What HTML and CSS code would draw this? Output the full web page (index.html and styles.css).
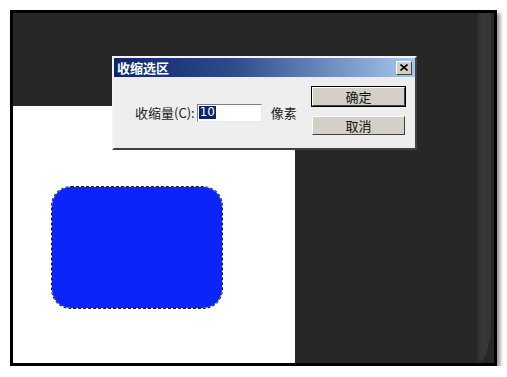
FILE: index.html
```html
<!DOCTYPE html>
<html>

<head>
    <meta charset="UTF-8">
    <title>收缩选区</title>
    <link rel="stylesheet" href="styles.css">
</head>

<body>

    <div class="frame">
        <div class="workspace">
            <div class="canvas">
                <div class="shape"></div>
            </div>
            <div class="rail"></div>
        </div>

        <div class="dialog">
            <div class="titlebar">
                <span class="title">收缩选区</span>
                <span class="close">
                    <svg width="8" height="7" viewBox="0 0 8 7">
                        <path d="M0.5 0.5 L7.5 6.5 M7.5 0.5 L0.5 6.5" stroke="#000" stroke-width="1.6" fill="none" />
                    </svg>
                </span>
            </div>
            <div class="dialog-body">
                <div class="field">
                    <label for="amount">收缩量(C):</label>
                    <span class="input" id="amount"><span class="sel">10</span></span>
                    <span class="unit">像素</span>
                </div>
                <div class="buttons">
                    <button type="button" class="btn default">确定</button>
                    <button type="button" class="btn">取消</button>
                </div>
            </div>
        </div>
    </div>

</body>

</html>
```

FILE: styles.css
```css
body {
    margin: 0;
    background: #fff;
    font-family: "Noto Sans CJK SC", "DejaVu Sans", sans-serif;
}

.frame {
    position: relative;
    width: 481px;
    height: 350px;
    margin: 10px 0 0 10px;
    border: 3px solid #000;
    box-shadow: 3px 3px 4px rgba(0, 0, 0, 0.45);
}

.workspace {
    display: flex;
    align-items: flex-end;
    height: 100%;
    background: #272727;
}

.canvas {
    width: 282px;
    height: 257px;
    padding: 80px 0 0 38px;
    box-sizing: border-box;
    background: #fff;
}

.shape {
    width: 172px;
    height: 123px;
    box-sizing: border-box;
    border: 1px dashed #101830;
    border-radius: 20px;
    background: #0b24f8;
    background-clip: padding-box;
}

.rail {
    align-self: stretch;
    width: 14px;
    margin: 0 3px 0 auto;
    background: linear-gradient(to right, #2c2c2c, #383838 40%, #363636);
    border-bottom-right-radius: 14px 40px;
}

.dialog {
    position: absolute;
    left: 99px;
    top: 43px;
    width: 301px;
    height: 90px;
    border: 2px solid;
    border-color: #f4f4f4 #404040 #404040 #f4f4f4;
    background: #eeeeee;
}

.titlebar {
    display: flex;
    align-items: center;
    height: 19px;
    padding: 0 3px 0 3px;
    background: linear-gradient(to right, #0c266c, #2e4c8a 40%, #a6c8ee);
}

.title {
    color: #fff;
    font-size: 13px;
    font-weight: bold;
    line-height: 19px;
}

.close {
    display: flex;
    align-items: center;
    justify-content: center;
    width: 14px;
    height: 12px;
    margin-left: auto;
    background: #d4d0c8;
    border: 1px solid;
    border-color: #fff #404040 #404040 #fff;
}

.dialog-body {
    display: flex;
    align-items: flex-start;
    padding: 10px 10px 0 21px;
}

.field {
    display: flex;
    align-items: center;
    margin-top: 16px;
    font-size: 13px;
    color: #222;
}

.input {
    display: flex;
    align-items: center;
    width: 61px;
    height: 14px;
    margin-left: 2px;
    padding: 1px;
    border: 1px solid;
    border-color: #808080 #e8e8e8 #e8e8e8 #808080;
    background: #fff;
}

.sel {
    padding: 0 1px;
    background: #0a246a;
    color: #fff;
    font-family: "DejaVu Sans", sans-serif;
    font-size: 12px;
    line-height: 13px;
}

.unit {
    margin-left: 9px;
}

.buttons {
    display: flex;
    flex-direction: column;
    gap: 10px;
    margin-left: auto;
}

.btn {
    width: 93px;
    height: 19px;
    padding: 0;
    font-family: inherit;
    font-size: 13px;
    line-height: 16px;
    color: #111;
    background: #d4d0c8;
    border: 1px solid;
    border-color: #fff #404040 #404040 #fff;
}

.default {
    outline: 1px solid #000;
}
```
